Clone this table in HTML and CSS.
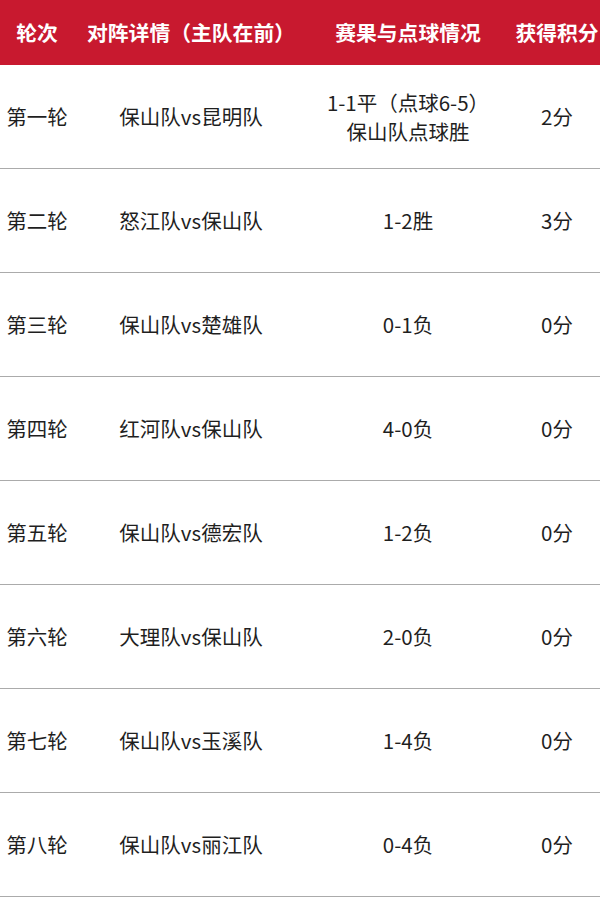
FILE: index.html
```html
<!DOCTYPE html>
<html lang="zh-CN">
<head>
<meta charset="utf-8">
<link rel="stylesheet" href="styles.css">
</head>
<body>
<div class="sheet">
  <div class="row head">
    <div>轮次</div>
    <div>对阵详情（主队在前）</div>
    <div>赛果与点球情况</div>
    <div>获得积分</div>
  </div>
  <div class="row">
    <div>第一轮</div>
    <div>保山队vs昆明队</div>
    <div class="two">1-1平（点球6-5）<br>保山队点球胜</div>
    <div>2分</div>
  </div>
  <div class="row">
    <div>第二轮</div>
    <div>怒江队vs保山队</div>
    <div>1-2胜</div>
    <div>3分</div>
  </div>
  <div class="row">
    <div>第三轮</div>
    <div>保山队vs楚雄队</div>
    <div>0-1负</div>
    <div>0分</div>
  </div>
  <div class="row">
    <div>第四轮</div>
    <div>红河队vs保山队</div>
    <div>4-0负</div>
    <div>0分</div>
  </div>
  <div class="row">
    <div>第五轮</div>
    <div>保山队vs德宏队</div>
    <div>1-2负</div>
    <div>0分</div>
  </div>
  <div class="row">
    <div>第六轮</div>
    <div>大理队vs保山队</div>
    <div>2-0负</div>
    <div>0分</div>
  </div>
  <div class="row">
    <div>第七轮</div>
    <div>保山队vs玉溪队</div>
    <div>1-4负</div>
    <div>0分</div>
  </div>
  <div class="row">
    <div>第八轮</div>
    <div>保山队vs丽江队</div>
    <div>0-4负</div>
    <div>0分</div>
  </div>
</div>
</body>
</html>
```

FILE: styles.css
```css
html, body {
  margin: 0;
  padding: 0;
  background: #fff;
  overflow: hidden;
}
.sheet {
  width: 606px;
  font-family: "Noto Sans CJK SC", "Noto Sans", sans-serif;
  font-size: 20.5px;
  color: #1f1f1f;
}
.row {
  display: grid;
  grid-template-columns: 74px 234px 200px 98px;
  height: 104px;
  box-sizing: border-box;
  border-bottom: 1px solid #ababab;
  align-items: center;
  text-align: center;
  line-height: 29px;
}
.row.head {
  height: 65px;
  border-bottom: none;
  background: #c8192f;
  color: #fff;
  font-weight: bold;
  font-size: 20.8px;
}
.two {
  line-height: 29px;
}
```
